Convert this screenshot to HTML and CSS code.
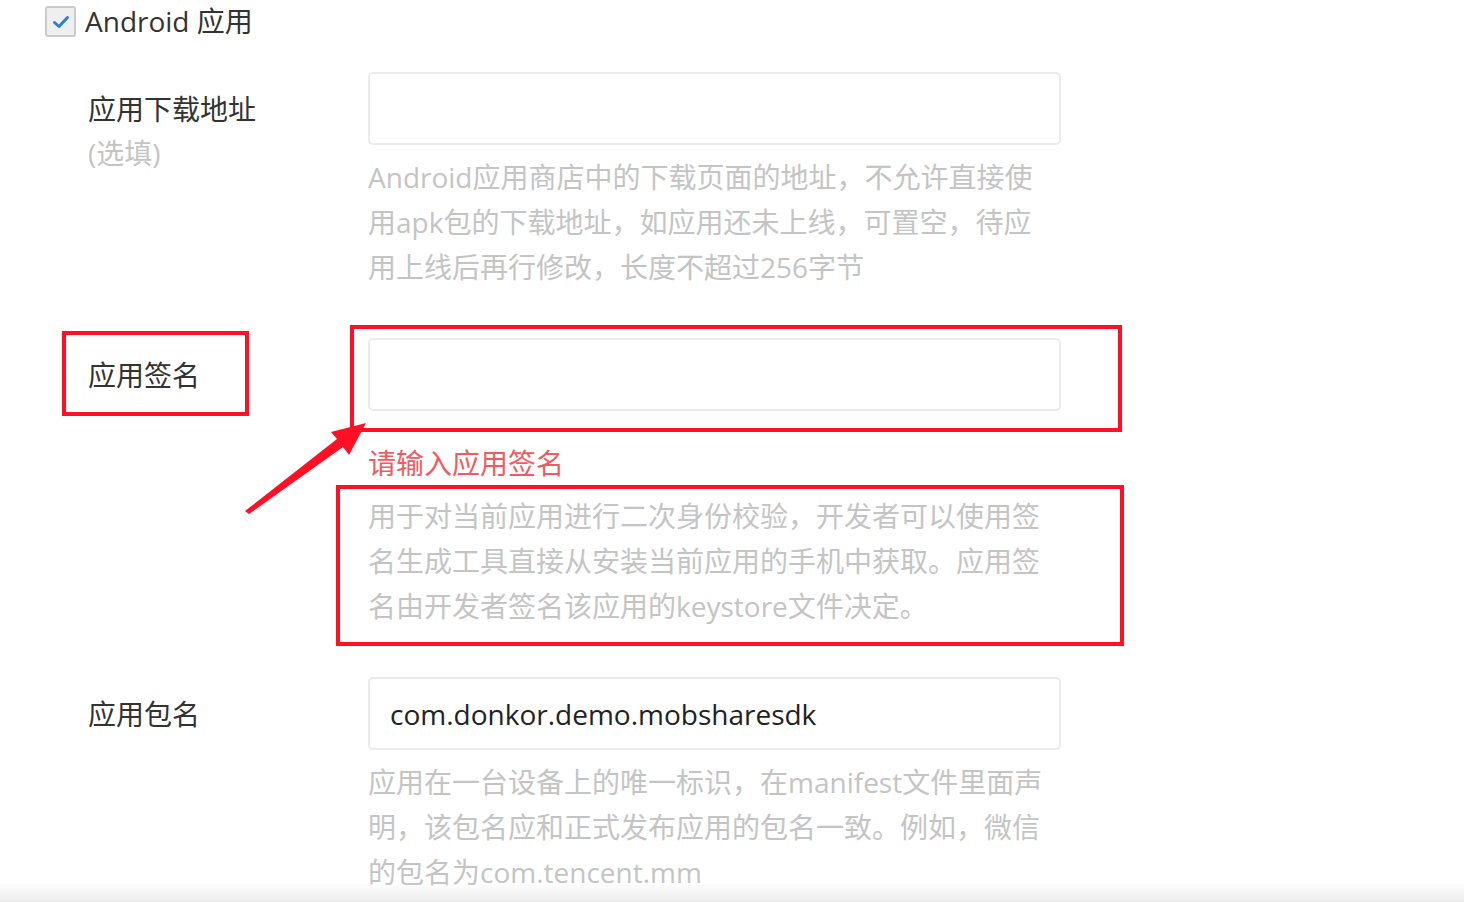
FILE: index.html
```html
<!DOCTYPE html>
<html lang="zh-CN">

<head>
    <meta charset="UTF-8">
    <title>Android 应用</title>
    <link rel="stylesheet" href="styles.css">
</head>

<body>
    <div class="platform">
        <span class="checkbox">
            <svg viewBox="0 0 20 20" width="20" height="20"><path d="M3.5 10.5 L8 14.5 L16.5 5.5" fill="none" stroke="#2a7fd4" stroke-width="3" stroke-linecap="round" stroke-linejoin="round"/></svg>
        </span>
        <span class="platform-name">Android 应用</span>
    </div>

    <div class="form">
        <div class="row">
            <div class="label">应用下载地址<span class="optional">(选填)</span></div>
            <div class="field">
                <div class="input"></div>
                <p class="help">Android应用商店中的下载页面的地址，不允许直接使<br>用apk包的下载地址，如应用还未上线，可置空，待应<br>用上线后再行修改，长度不超过256字节</p>
            </div>
        </div>

        <div class="row">
            <div class="label">应用签名</div>
            <div class="field">
                <div class="input"></div>
                <p class="error">请输入应用签名</p>
                <p class="help help-tight">用于对当前应用进行二次身份校验，开发者可以使用签<br>名生成工具直接从安装当前应用的手机中获取。应用签<br>名由开发者签名该应用的keystore文件决定。</p>
            </div>
            <!-- annotation marks -->
            <span class="mark mark-label"></span>
            <span class="mark mark-input"></span>
            <span class="mark mark-help"></span>
            <svg class="arrow" viewBox="0 0 130 100" width="130" height="100">
                <polygon points="5,92 97,20 91,13 126,4 109,36 103,28 9,95" fill="#ff1024"/>
            </svg>
        </div>

        <div class="row">
            <div class="label">应用包名</div>
            <div class="field">
                <div class="input"><span class="value">com.donkor.demo.mobsharesdk</span></div>
                <p class="help">应用在一台设备上的唯一标识，在manifest文件里面声<br>明，该包名应和正式发布应用的包名一致。例如，微信<br>的包名为com.tencent.mm</p>
            </div>
        </div>
    </div>

    <div class="bottom-shade"></div>
</body>

</html>
```

FILE: styles.css
```css
:root {
    --text-color: #333;
    --muted-color: #c4c4c4;
    --error-color: #f25a60;
    --mark-color: #ff1024;
    --input-border: #ebebeb;
}

* {
    margin: 0;
    padding: 0;
    box-sizing: border-box;
}

body {
    font-family: 'Open Sans', 'Noto Sans CJK SC', sans-serif;
    font-size: 28px;
    color: var(--text-color);
    background-color: #fff;
    overflow: hidden;
}

.platform {
    display: flex;
    align-items: center;
    gap: 9px;
    padding: 6px 0 0 45px;
    height: 37px;
}

.checkbox {
    width: 31px;
    height: 31px;
    border: 2px solid #cbcbcb;
    border-radius: 3px;
    background-color: #efefef;
    display: flex;
    align-items: center;
    justify-content: center;
}

.platform-name {
    line-height: 31px;
}

.form {
    padding: 35px 0 0 88px;
    display: flex;
    flex-direction: column;
    gap: 48px;
}

.row {
    position: relative;
    display: grid;
    grid-template-columns: 280px 693px;
}

.label {
    padding-top: 15px;
    line-height: 44px;
}

.optional {
    display: block;
    color: var(--muted-color);
}

.input {
    height: 73px;
    border: 2px solid var(--input-border);
    border-radius: 5px;
    display: flex;
    align-items: center;
    padding-left: 20px;
}

.value {
    color: #222;
}

.help {
    margin-top: 10px;
    line-height: 45px;
    color: var(--muted-color);
}

.help-tight {
    margin-top: 8px;
}

.error {
    margin-top: 30px;
    line-height: 45px;
    color: var(--error-color);
}

.mark {
    position: absolute;
    border: 4px solid var(--mark-color);
}

.mark-label {
    left: -26px;
    top: -7px;
    width: 187px;
    height: 85px;
}

.mark-input {
    left: 262px;
    top: -13px;
    width: 772px;
    height: 107px;
}

.mark-help {
    left: 248px;
    top: 147px;
    width: 788px;
    height: 161px;
}

.arrow {
    position: absolute;
    left: 152px;
    top: 81px;
}

.bottom-shade {
    position: fixed;
    left: 0;
    right: 0;
    bottom: 0;
    height: 20px;
    background: linear-gradient(to bottom, rgba(238, 238, 238, 0), #ececec);
}
```
